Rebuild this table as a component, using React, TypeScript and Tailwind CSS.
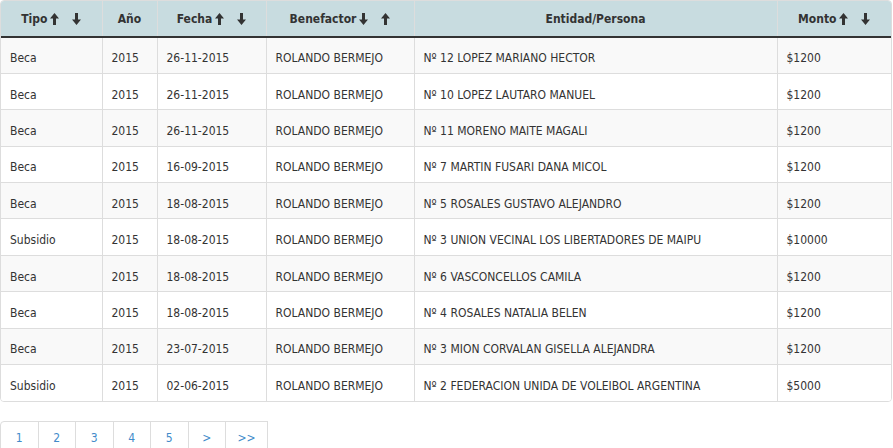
import React from 'react';

type Row = { tipo: string; anio: string; fecha: string; benefactor: string; entidad: string; monto: string };

const rows: Row[] = [
  { tipo: 'Beca', anio: '2015', fecha: '26-11-2015', benefactor: 'ROLANDO BERMEJO', entidad: 'Nº 12 LOPEZ MARIANO HECTOR', monto: '$1200' },
  { tipo: 'Beca', anio: '2015', fecha: '26-11-2015', benefactor: 'ROLANDO BERMEJO', entidad: 'Nº 10 LOPEZ LAUTARO MANUEL', monto: '$1200' },
  { tipo: 'Beca', anio: '2015', fecha: '26-11-2015', benefactor: 'ROLANDO BERMEJO', entidad: 'Nº 11 MORENO MAITE MAGALI', monto: '$1200' },
  { tipo: 'Beca', anio: '2015', fecha: '16-09-2015', benefactor: 'ROLANDO BERMEJO', entidad: 'Nº 7 MARTIN FUSARI DANA MICOL', monto: '$1200' },
  { tipo: 'Beca', anio: '2015', fecha: '18-08-2015', benefactor: 'ROLANDO BERMEJO', entidad: 'Nº 5 ROSALES GUSTAVO ALEJANDRO', monto: '$1200' },
  { tipo: 'Subsidio', anio: '2015', fecha: '18-08-2015', benefactor: 'ROLANDO BERMEJO', entidad: 'Nº 3 UNION VECINAL LOS LIBERTADORES DE MAIPU', monto: '$10000' },
  { tipo: 'Beca', anio: '2015', fecha: '18-08-2015', benefactor: 'ROLANDO BERMEJO', entidad: 'Nº 6 VASCONCELLOS CAMILA', monto: '$1200' },
  { tipo: 'Beca', anio: '2015', fecha: '18-08-2015', benefactor: 'ROLANDO BERMEJO', entidad: 'Nº 4 ROSALES NATALIA BELEN', monto: '$1200' },
  { tipo: 'Beca', anio: '2015', fecha: '23-07-2015', benefactor: 'ROLANDO BERMEJO', entidad: 'Nº 3 MION CORVALAN GISELLA ALEJANDRA', monto: '$1200' },
  { tipo: 'Subsidio', anio: '2015', fecha: '02-06-2015', benefactor: 'ROLANDO BERMEJO', entidad: 'Nº 2 FEDERACION UNIDA DE VOLEIBOL ARGENTINA', monto: '$5000' },
];

function Arrow({ down = false }: { down?: boolean }) {
  return (
    <svg width="9" height="12" viewBox="0 0 9 12" className={down ? 'rotate-180' : ''}>
      <path d="M4.5 0 L9 5.5 H6 V12 H3 V5.5 H0 Z" fill="#333" />
    </svg>
  );
}

function SortHeader({ label, first, second }: { label: string; first: 'up' | 'down'; second: 'up' | 'down' }) {
  return (
    <span className="inline-flex items-center">
      <span>{label}</span>
      <span className="ml-[3px]"><Arrow down={first === 'down'} /></span>
      <span className="ml-[13px]"><Arrow down={second === 'down'} /></span>
    </span>
  );
}

const th = 'h-[36px] border-r border-[#ddd] px-2 text-center font-bold text-[#333] last:border-r-0';
const td = 'border-r border-t border-[#ddd] pl-[9px] pt-[6px] last:border-r-0';

export default function App() {
  return (
    <div className="bg-white w-[893px] h-[448px] overflow-hidden text-[12px] text-[#333]" style={{ fontFamily: '"DejaVu Sans Condensed", "DejaVu Sans", sans-serif' }}>
      <div className="w-[892px] border border-[#ddd] rounded-[4px] overflow-hidden">
        <table className="w-full border-collapse table-fixed">
          <colgroup>
            <col className="w-[101px]" />
            <col className="w-[55px]" />
            <col className="w-[109px]" />
            <col className="w-[148px]" />
            <col className="w-[363px]" />
            <col />
          </colgroup>
          <thead>
            <tr className="bg-[#c8dce0] border-b-2 border-[#333]">
              <th className={th}><SortHeader label="Tipo" first="up" second="down" /></th>
              <th className={th}>Año</th>
              <th className={th}><SortHeader label="Fecha" first="up" second="down" /></th>
              <th className={th}><SortHeader label="Benefactor" first="down" second="up" /></th>
              <th className={th}>Entidad/Persona</th>
              <th className={th}><SortHeader label="Monto" first="up" second="down" /></th>
            </tr>
          </thead>
          <tbody>
            {rows.map((r, i) => (
              <tr key={i} className={`h-[36.4px] ${i % 2 === 0 ? 'bg-[#f9f9f9]' : 'bg-white'}`}>
                <td className={td}>{r.tipo}</td>
                <td className={td}>{r.anio}</td>
                <td className={td}>{r.fecha}</td>
                <td className={td}>{r.benefactor}</td>
                <td className={td}>{r.entidad}</td>
                <td className={td}>{r.monto}</td>
              </tr>
            ))}
          </tbody>
        </table>
      </div>
      <ul className="mt-[19px] flex">
        {['1', '2', '3', '4', '5', '>', '>>'].map((p, i) => (
          <li
            key={p}
            className={`h-[34px] flex items-center justify-center border border-[#ddd] text-[#428bca] ${i === 0 ? 'rounded-l-[4px]' : '-ml-px'} ${p === '>>' ? 'w-[43px]' : 'w-[38.5px]'}`}
          >
            {p}
          </li>
        ))}
      </ul>
    </div>
  );
}
